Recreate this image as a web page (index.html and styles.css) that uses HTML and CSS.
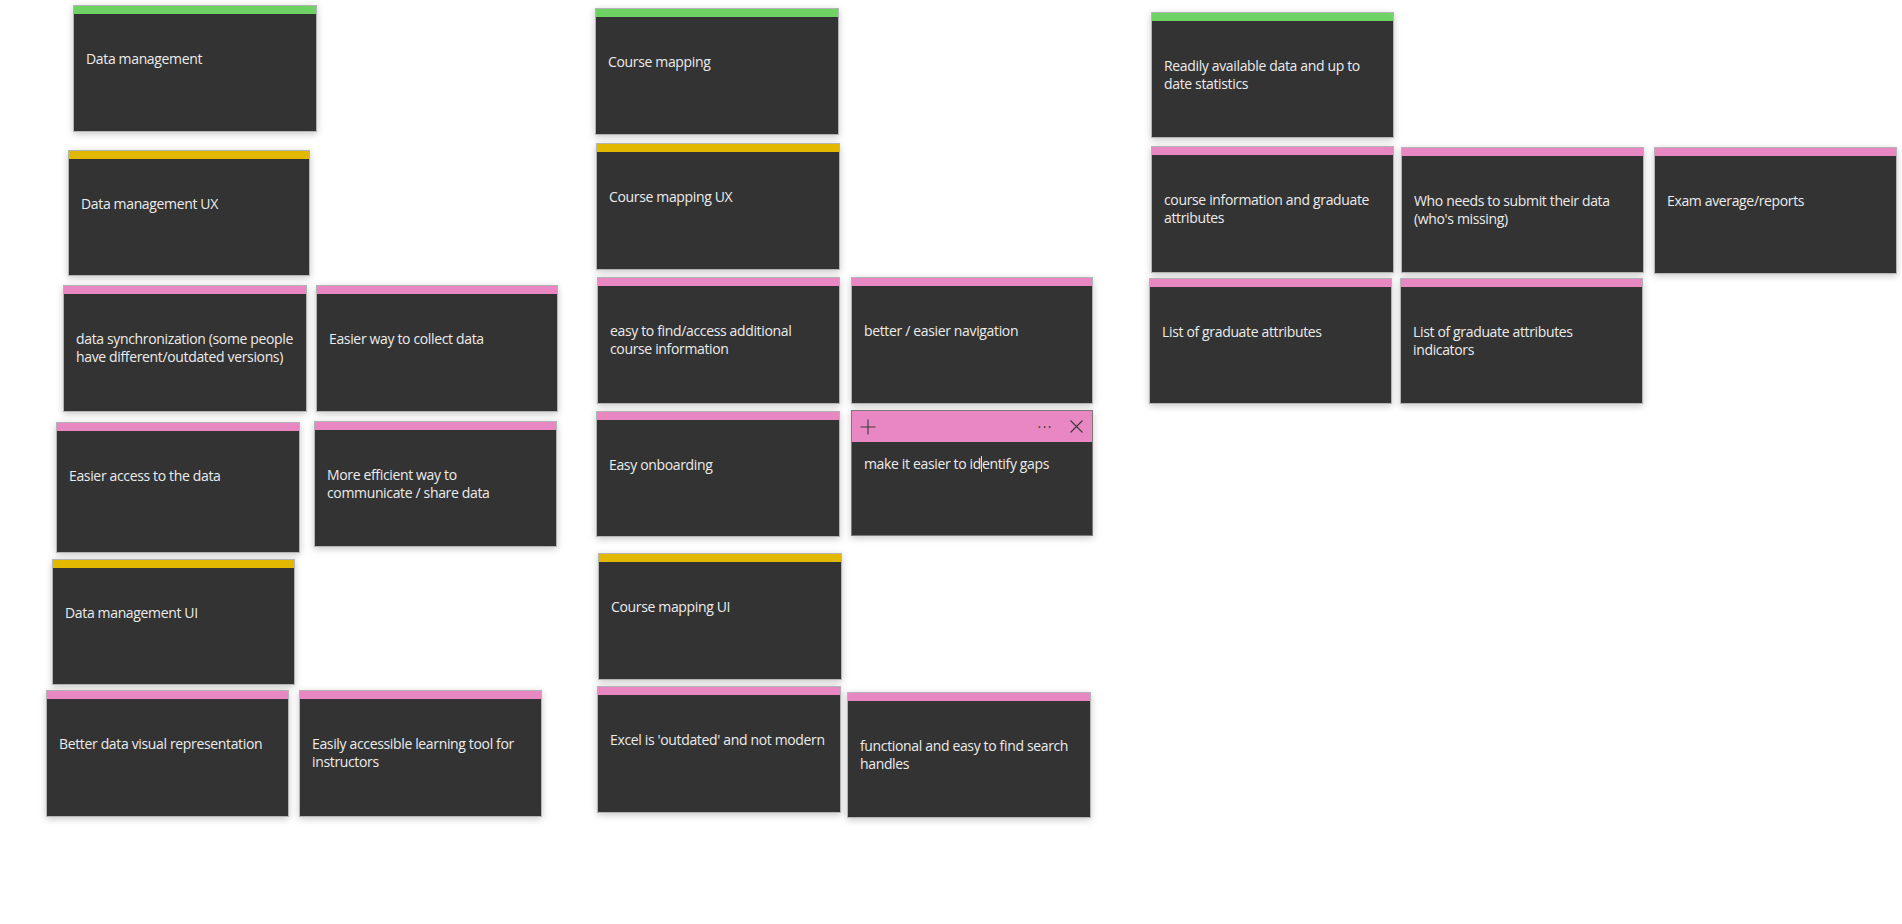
FILE: index.html
```html
<!DOCTYPE html>
<html lang="en">
<head>
<meta charset="utf-8">
<title>Board</title>
<link rel="stylesheet" href="styles.css">
</head>
<body>
<main class="board">
  <div class="note green" style="left:73px;top:5px;width:244px;height:127px"><div class="bar"></div><p class="txt">Data management</p></div>
  <div class="note yellow" style="left:68px;top:150px;width:242px;height:126px"><div class="bar"></div><p class="txt">Data management UX</p></div>
  <div class="note pink" style="left:63px;top:285px;width:244px;height:127px"><div class="bar"></div><p class="txt">data synchronization (some people<br>have different/outdated versions)</p></div>
  <div class="note pink" style="left:316px;top:285px;width:242px;height:127px"><div class="bar"></div><p class="txt">Easier way to collect data</p></div>
  <div class="note pink" style="left:56px;top:422px;width:244px;height:131px"><div class="bar"></div><p class="txt">Easier access to the data</p></div>
  <div class="note pink" style="left:314px;top:421px;width:243px;height:126px"><div class="bar"></div><p class="txt">More efficient way to<br>communicate / share data</p></div>
  <div class="note yellow" style="left:52px;top:559px;width:243px;height:126px"><div class="bar"></div><p class="txt">Data management UI</p></div>
  <div class="note pink" style="left:46px;top:690px;width:243px;height:127px"><div class="bar"></div><p class="txt">Better data visual representation</p></div>
  <div class="note pink" style="left:299px;top:690px;width:243px;height:127px"><div class="bar"></div><p class="txt">Easily accessible learning tool for<br>instructors</p></div>

  <div class="note green" style="left:595px;top:8px;width:244px;height:127px"><div class="bar"></div><p class="txt">Course mapping</p></div>
  <div class="note yellow" style="left:596px;top:143px;width:244px;height:127px"><div class="bar"></div><p class="txt">Course mapping UX</p></div>
  <div class="note pink" style="left:597px;top:277px;width:243px;height:127px"><div class="bar"></div><p class="txt">easy to find/access additional<br>course information</p></div>
  <div class="note pink" style="left:851px;top:277px;width:242px;height:127px"><div class="bar"></div><p class="txt">better / easier navigation</p></div>
  <div class="note pink" style="left:596px;top:411px;width:244px;height:126px"><div class="bar"></div><p class="txt">Easy onboarding</p></div>
  <div class="note pink editing" style="left:851px;top:410px;width:242px;height:126px">
    <div class="bar head">
      <svg class="ic plus" width="16" height="16" viewBox="0 0 16 16"><path d="M8 0.5V15.5M0.5 8H15.5" stroke="#3a3a3a" stroke-width="1.1" fill="none"/></svg>
      <span class="dots">···</span>
      <svg class="ic close" width="13" height="13" viewBox="0 0 13 13"><path d="M0.5 0.5L12.5 12.5M12.5 0.5L0.5 12.5" stroke="#3a3a3a" stroke-width="1.1" fill="none"/></svg>
    </div>
    <p class="txt">make it easier to id<span class="caret"></span>entify gaps</p>
  </div>
  <div class="note yellow" style="left:598px;top:553px;width:244px;height:127px"><div class="bar"></div><p class="txt">Course mapping UI</p></div>
  <div class="note pink" style="left:597px;top:686px;width:244px;height:127px"><div class="bar"></div><p class="txt">Excel is 'outdated' and not modern</p></div>
  <div class="note pink" style="left:847px;top:692px;width:244px;height:126px"><div class="bar"></div><p class="txt">functional and easy to find search<br>handles</p></div>

  <div class="note green" style="left:1151px;top:12px;width:243px;height:126px"><div class="bar"></div><p class="txt">Readily available data and up to<br>date statistics</p></div>
  <div class="note pink" style="left:1151px;top:146px;width:243px;height:127px"><div class="bar"></div><p class="txt">course information and graduate<br>attributes</p></div>
  <div class="note pink" style="left:1401px;top:147px;width:243px;height:126px"><div class="bar"></div><p class="txt">Who needs to submit their data<br>(who's missing)</p></div>
  <div class="note pink" style="left:1654px;top:147px;width:243px;height:127px"><div class="bar"></div><p class="txt">Exam average/reports</p></div>
  <div class="note pink" style="left:1149px;top:278px;width:243px;height:126px"><div class="bar"></div><p class="txt">List of graduate attributes</p></div>
  <div class="note pink" style="left:1400px;top:278px;width:243px;height:126px"><div class="bar"></div><p class="txt">List of graduate attributes<br>indicators</p></div>
</main>
</body>
</html>
```

FILE: styles.css
```css
html, body {
  margin: 0;
  padding: 0;
  background: #ffffff;
}

.board {
  position: relative;
  width: 1902px;
  height: 924px;
  overflow: hidden;
  font-family: "Open Sans", "Noto Sans", sans-serif;
}

.note {
  position: absolute;
  box-sizing: border-box;
  background: #333333;
  border: 1px solid #b4b4b4;
  box-shadow: 0 2px 7px rgba(0, 0, 0, 0.22);
  display: flex;
  flex-direction: column;
}

.bar {
  height: 8px;
  flex: none;
}

.green .bar { background: #6fd264; }
.yellow .bar { background: #e2b800; }
.pink .bar { background: #e987c3; }

.txt {
  margin: 0;
  padding: 36px 12px 0 12px;
  color: #ececec;
  font-size: 14px;
  line-height: 18px;
  letter-spacing: -0.35px;
  white-space: nowrap;
}

.editing {
  border-color: #7a7a7a;
}

.editing .head {
  height: 31px;
  display: flex;
  align-items: center;
  padding: 0 9px 0 8px;
  gap: 0;
}

.editing .txt {
  padding-top: 13px;
}

.ic { display: block; flex: none; }

.dots {
  margin-left: auto;
  margin-right: 17px;
  color: #3a3a3a;
  font-size: 14px;
  letter-spacing: 1.5px;
  line-height: 14px;
}

.caret {
  display: inline-block;
  width: 0;
  height: 16px;
  border-left: 1px solid #e0e0e0;
  vertical-align: -3px;
}
```
